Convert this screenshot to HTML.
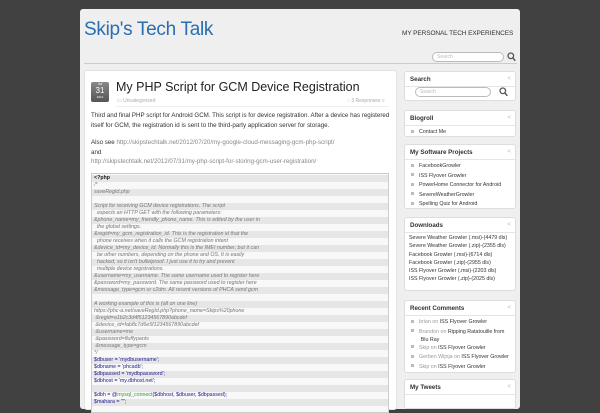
<!DOCTYPE html>
<html><head><meta charset="utf-8"><style>
*{margin:0;padding:0;box-sizing:border-box}
body{width:600px;height:400px;overflow:hidden;background:#414141;font-family:"Liberation Sans",sans-serif;position:relative}
.page{position:absolute;left:80px;top:9px;width:440px;height:400px;background:#efefef;border-radius:3px}
.title{position:absolute;left:84px;top:19px;font-size:19px;color:#2a6db0;letter-spacing:-0.3px}
.tag{position:absolute;left:402px;top:30px;font-size:6.5px;color:#333;letter-spacing:-0.1px}
.sbox{position:absolute;border:1px solid #bbb;border-radius:5px;background:#fff;font-size:5px;color:#bbb;padding:1px 4px}
.hr{position:absolute;left:84px;top:63px;width:433px;height:1px;background:#ccc}
.main{position:absolute;left:84px;top:70px;width:313px;height:340px;background:#fff;border:1px solid #e2e2e2;border-radius:3px}
.date{position:absolute;left:91px;top:82px;width:18px;height:20px;background:linear-gradient(#888,#555);border-radius:2px;color:#fff;text-align:center}
.ptitle{position:absolute;left:116px;top:80px;font-size:12.5px;color:#222}
.meta{position:absolute;top:98px;font-size:5px;color:#aaa}
.txt{position:absolute;left:91px;font-size:6.2px;color:#333;line-height:9.5px;width:300px}
.lnk{color:#888}
.code{position:absolute;left:91px;top:173px;width:298px;height:240px;border:1px solid #ccc;background:#f8f8f8;padding-top:1px;overflow:hidden}
.code div{height:7px;line-height:7px;font-size:5.3px;font-style:italic;color:#777;padding-left:2px;white-space:nowrap}
.code div:nth-child(odd){background:#e6e6e6}
.code div.k{font-style:normal;color:#1a1a8a}
.w{position:absolute;left:404px;width:112px;background:#fff;border:1px solid #ddd;border-radius:3px}
.w h3{font-size:6.2px;color:#333;padding:4px 5px 3px;border-bottom:1px solid #e5e5e5;font-weight:bold;position:relative}
.w h3:after{content:"<";position:absolute;right:4px;top:3px;color:#bbb;font-weight:normal}
.w ul{list-style:none;padding:2px 4px}
.w li{font-size:5.3px;color:#333;line-height:9.5px}
.w li.b:before{content:"";display:inline-block;width:3px;height:3px;background:#bbb;margin:0 5px 1px 2px;vertical-align:middle}
.g{color:#999}
</style></head><body>
<div class="page"></div>
<div class="title">Skip's Tech Talk</div>
<div class="tag">MY PERSONAL TECH EXPERIENCES</div>
<div class="sbox" style="left:432px;top:52px;width:72px;height:10px">Search</div>
<svg style="position:absolute;left:507px;top:52px" width="9" height="10" viewBox="0 0 9 10"><circle cx="3.8" cy="3.8" r="2.8" fill="none" stroke="#555" stroke-width="1.3"/><path d="M5.8 5.8L8.3 8.8" stroke="#555" stroke-width="1.5"/></svg>
<div class="hr"></div>
<div class="main"></div>
<div class="date"><div style="font-size:3.5px;height:5px">Jul</div><div style="font-size:8px;line-height:8px">31</div><div style="font-size:3px">2012</div></div>
<div class="ptitle">My PHP Script for GCM Device Registration</div>
<div class="meta" style="left:117px">▭ Uncategorized</div>
<div class="meta" style="left:347px">◌ 3 Responses »</div>
<div style="position:absolute;left:116px;top:106px;width:273px;height:1px;background:#eee"></div>
<div class="txt" style="top:111px">Third and final PHP script for Android GCM. This script is for device registration. After a device has registered itself for GCM, the registration id is sent to the third-party application server for storage.</div>
<div class="txt" style="top:138px">Also see <span class="lnk">http://skipstechtalk.net/2012/07/20/my-google-cloud-messaging-gcm-php-script/</span><br>and<br><span class="lnk">http://skipstechtalk.net/2012/07/31/my-php-script-for-storing-gcm-user-registration/</span></div>
<div class="code">
<div class="k" style="color:#222;font-weight:bold">&lt;?php</div><div>/*</div><div>saveRegId.php</div><div></div>
<div>Script for receiving GCM device registrations. The script</div><div>&nbsp; expects an HTTP GET with the following parameters:</div>
<div>&amp;phone_name=my_friendly_phone_name. This is edited by the user in</div><div>&nbsp; the global settings.</div>
<div>&amp;regid=my_gcm_registration_id. This is the registration id that the</div><div>&nbsp; phone receives when it calls the GCM registration intent</div>
<div>&amp;device_id=my_device_id. Normally this is the IMEI number, but it can</div><div>&nbsp; be other numbers, depending on the phone and OS. It is easily</div>
<div>&nbsp; hacked, so it isn't bulletproof. I just use it to try and prevent</div><div>&nbsp; multiple device registrations.</div>
<div>&amp;username=my_username. The same username used to register here</div><div>&amp;password=my_password. The same password used to register here</div>
<div>&amp;message_type=gcm or c2dm. All recent versions of PHCA send gcm</div><div></div>
<div>A working example of this is (all on one line)</div><div>https://phc-a.net/saveRegId.php?phone_name=Skips%20phone</div>
<div>&nbsp;&amp;regid=a1b2c3d4f51234567890abcdef</div><div>&nbsp;&amp;device_id=fab8c7d6e5f1234567890abcdef</div>
<div>&nbsp;&amp;username=me</div><div>&nbsp;&amp;password=fluffypants</div><div>&nbsp;&amp;message_type=gcm</div><div>*/</div>
<div class="k">$dbuser = 'mydbusername';</div><div class="k">$dbname = 'phcadb';</div><div class="k">$dbpassed = 'mydbpassword';</div><div class="k">$dbhost = 'my.dbhost.net';</div><div></div>
<div class="k">$dbh = @<span style="color:#393">mysql_connect</span>($dbhost, $dbuser, $dbpassed);</div><div class="k">$mahara = "";</div>
</div>
<div class="w" style="top:71px;height:30px"><h3>Search</h3><div class="sbox" style="left:10px;top:15px;width:76px;height:10px;position:absolute">Search</div><svg style="position:absolute;left:94px;top:15px" width="9" height="10" viewBox="0 0 9 10"><circle cx="3.8" cy="3.8" r="2.8" fill="none" stroke="#555" stroke-width="1.3"/><path d="M5.8 5.8L8.3 8.8" stroke="#555" stroke-width="1.5"/></svg></div>
<div class="w" style="top:110px;height:27px"><h3>Blogroll</h3><ul><li class="b">Contact Me</li></ul></div>
<div class="w" style="top:144px;height:65px"><h3>My Software Projects</h3><ul><li class="b">FacebookGrowler</li><li class="b">ISS Flyover Growler</li><li class="b">PowerHome Connector for Android</li><li class="b">SevereWeatherGrowler</li><li class="b">Spelling Quiz for Android</li></ul></div>
<div class="w" style="top:217px;height:74px"><h3>Downloads</h3><ul style="padding:1px 4px"><li style="line-height:8.3px">Severe Weather Growler (.msi)-(4479 dls)</li><li style="line-height:8.3px">Severe Weather Growler (.zip)-(2355 dls)</li><li style="line-height:8.3px">Facebook Growler (.msi)-(6714 dls)</li><li style="line-height:8.3px">Facebook Growler (.zip)-(2955 dls)</li><li style="line-height:8.3px">ISS Flyover Growler (.msi)-(2203 dls)</li><li style="line-height:8.3px">ISS Flyover Growler (.zip)-(2025 dls)</li></ul></div>
<div class="w" style="top:300px;height:73px"><h3>Recent Comments</h3><ul><li class="b"><span class="g">brian on</span> ISS Flyover Growler</li><li class="b" style="line-height:8px"><span class="g">Brandon on</span> Ripping Ratatouille from<br>&nbsp;&nbsp;&nbsp;&nbsp;&nbsp;&nbsp;&nbsp;&nbsp;Blu Ray</li><li class="b"><span class="g">Skip on</span> ISS Flyover Growler</li><li class="b"><span class="g">Gerben Wijnja on</span> ISS Flyover Growler</li><li class="b"><span class="g">Skip on</span> ISS Flyover Growler</li></ul></div>
<div class="w" style="top:379px;height:30px"><h3>My Tweets</h3></div>
</body></html>
